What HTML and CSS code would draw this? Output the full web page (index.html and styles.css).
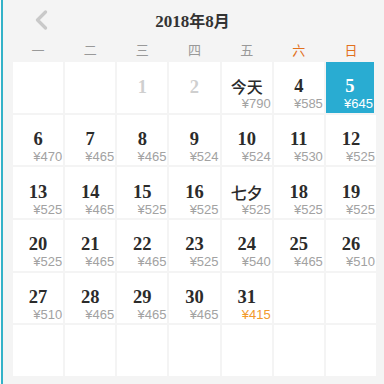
FILE: index.html
```html
<!DOCTYPE html>
<html>
<head>
<meta charset="utf-8">
<link rel="stylesheet" href="styles.css">
</head>
<body>
<div class="page">
  <div class="cal">
    <div class="head">
      <span class="prev"><svg width="14" height="20" viewBox="0 0 14 20"><path d="M11.5 2 L3.5 10 L11.5 18" fill="none" stroke="#c9c9c9" stroke-width="3.2" stroke-linecap="round" stroke-linejoin="round"/></svg></span>
      <span class="title"><b class="num">2018</b>年<b class="num">8</b>月</span>
    </div>
    <div class="week">
      <span>一</span><span>二</span><span>三</span><span>四</span><span>五</span><span class="we">六</span><span class="we">日</span>
    </div>
    <div class="grid">
      <div class="cell"></div>
      <div class="cell"></div>
      <div class="cell off"><span class="d">1</span></div>
      <div class="cell off"><span class="d">2</span></div>
      <div class="cell"><span class="d cn">今天</span><span class="p">¥790</span></div>
      <div class="cell"><span class="d">4</span><span class="p">¥585</span></div>
      <div class="cell sel"><span class="d">5</span><span class="p">¥645</span></div>

      <div class="cell"><span class="d">6</span><span class="p">¥470</span></div>
      <div class="cell"><span class="d">7</span><span class="p">¥465</span></div>
      <div class="cell"><span class="d">8</span><span class="p">¥465</span></div>
      <div class="cell"><span class="d">9</span><span class="p">¥524</span></div>
      <div class="cell"><span class="d">10</span><span class="p">¥524</span></div>
      <div class="cell"><span class="d">11</span><span class="p">¥530</span></div>
      <div class="cell"><span class="d">12</span><span class="p">¥525</span></div>

      <div class="cell"><span class="d">13</span><span class="p">¥525</span></div>
      <div class="cell"><span class="d">14</span><span class="p">¥465</span></div>
      <div class="cell"><span class="d">15</span><span class="p">¥525</span></div>
      <div class="cell"><span class="d">16</span><span class="p">¥525</span></div>
      <div class="cell"><span class="d cn">七夕</span><span class="p">¥525</span></div>
      <div class="cell"><span class="d">18</span><span class="p">¥525</span></div>
      <div class="cell"><span class="d">19</span><span class="p">¥525</span></div>

      <div class="cell"><span class="d">20</span><span class="p">¥525</span></div>
      <div class="cell"><span class="d">21</span><span class="p">¥465</span></div>
      <div class="cell"><span class="d">22</span><span class="p">¥465</span></div>
      <div class="cell"><span class="d">23</span><span class="p">¥525</span></div>
      <div class="cell"><span class="d">24</span><span class="p">¥540</span></div>
      <div class="cell"><span class="d">25</span><span class="p">¥465</span></div>
      <div class="cell"><span class="d">26</span><span class="p">¥510</span></div>

      <div class="cell"><span class="d">27</span><span class="p">¥510</span></div>
      <div class="cell"><span class="d">28</span><span class="p">¥465</span></div>
      <div class="cell"><span class="d">29</span><span class="p">¥465</span></div>
      <div class="cell"><span class="d">30</span><span class="p">¥465</span></div>
      <div class="cell"><span class="d">31</span><span class="p low">¥415</span></div>
      <div class="cell"></div>
      <div class="cell"></div>

      <div class="cell"></div>
      <div class="cell"></div>
      <div class="cell"></div>
      <div class="cell"></div>
      <div class="cell"></div>
      <div class="cell"></div>
      <div class="cell"></div>
    </div>
  </div>
</div>
</body>
</html>
```
FILE: styles.css
```css
html, body {
  margin: 0;
  padding: 0;
}
body {
  width: 384px;
  height: 384px;
  overflow: hidden;
  background: #fafafa;
  font-family: "Liberation Sans", "Noto Sans CJK SC", sans-serif;
}
.page {
  margin-left: 1px;
  border-left: 2px solid #33b2c8;
  height: 384px;
  box-sizing: border-box;
  background: #f4f4f4;
}
.cal {
  padding-left: 10px;
  width: 363px;
}
.head {
  height: 40px;
  display: flex;
  align-items: center;
  position: relative;
}
.prev {
  display: flex;
  margin-left: 21px;
}
.title {
  position: absolute;
  left: 0;
  right: 0;
  text-align: center;
  font-size: 16px;
  font-weight: bold;
  color: #333;
  font-family: "Noto Sans CJK SC", sans-serif;
  margin-left: -4px;
}
.title .num {
  font-family: "Liberation Serif", serif;
  font-size: 17px;
}
.week {
  display: grid;
  grid-template-columns: repeat(7, 1fr);
  column-gap: 2px;
  height: 18px;
  margin-bottom: 4px;
  align-items: center;
  font-family: "Noto Sans CJK SC", sans-serif;
  font-size: 13px;
  color: #999;
  text-align: center;
}
.week .we {
  color: #e2701c;
}
.grid {
  display: grid;
  grid-template-columns: repeat(7, 1fr);
  grid-template-rows: repeat(6, 50.67px);
  gap: 2px;
  background: #f4f4f4;
}
.cell {
  background: #fff;
  display: flex;
  flex-direction: column;
  justify-content: center;
  align-items: center;
}
.d {
  font-family: "Liberation Serif", serif;
  font-weight: bold;
  font-size: 18.5px;
  line-height: 18px;
  color: #2b2b2b;
  margin-top: 14px;
}
.d.cn {
  font-family: "Noto Sans CJK SC", sans-serif;
  font-weight: 500;
  font-size: 16px;
}
.p {
  align-self: flex-end;
  margin-right: 1px;
  font-size: 13px;
  line-height: 14px;
  color: #a2a2a2;
  margin-top: 2px;
}
.p.low {
  color: #f29a2c;
}
.off .d {
  color: #cfcfcf;
  margin-top: 0;
}
.sel {
  background: #29acd2;
  margin-right: 2px;
}
.sel .d, .sel .p {
  color: #fff;
}
```
